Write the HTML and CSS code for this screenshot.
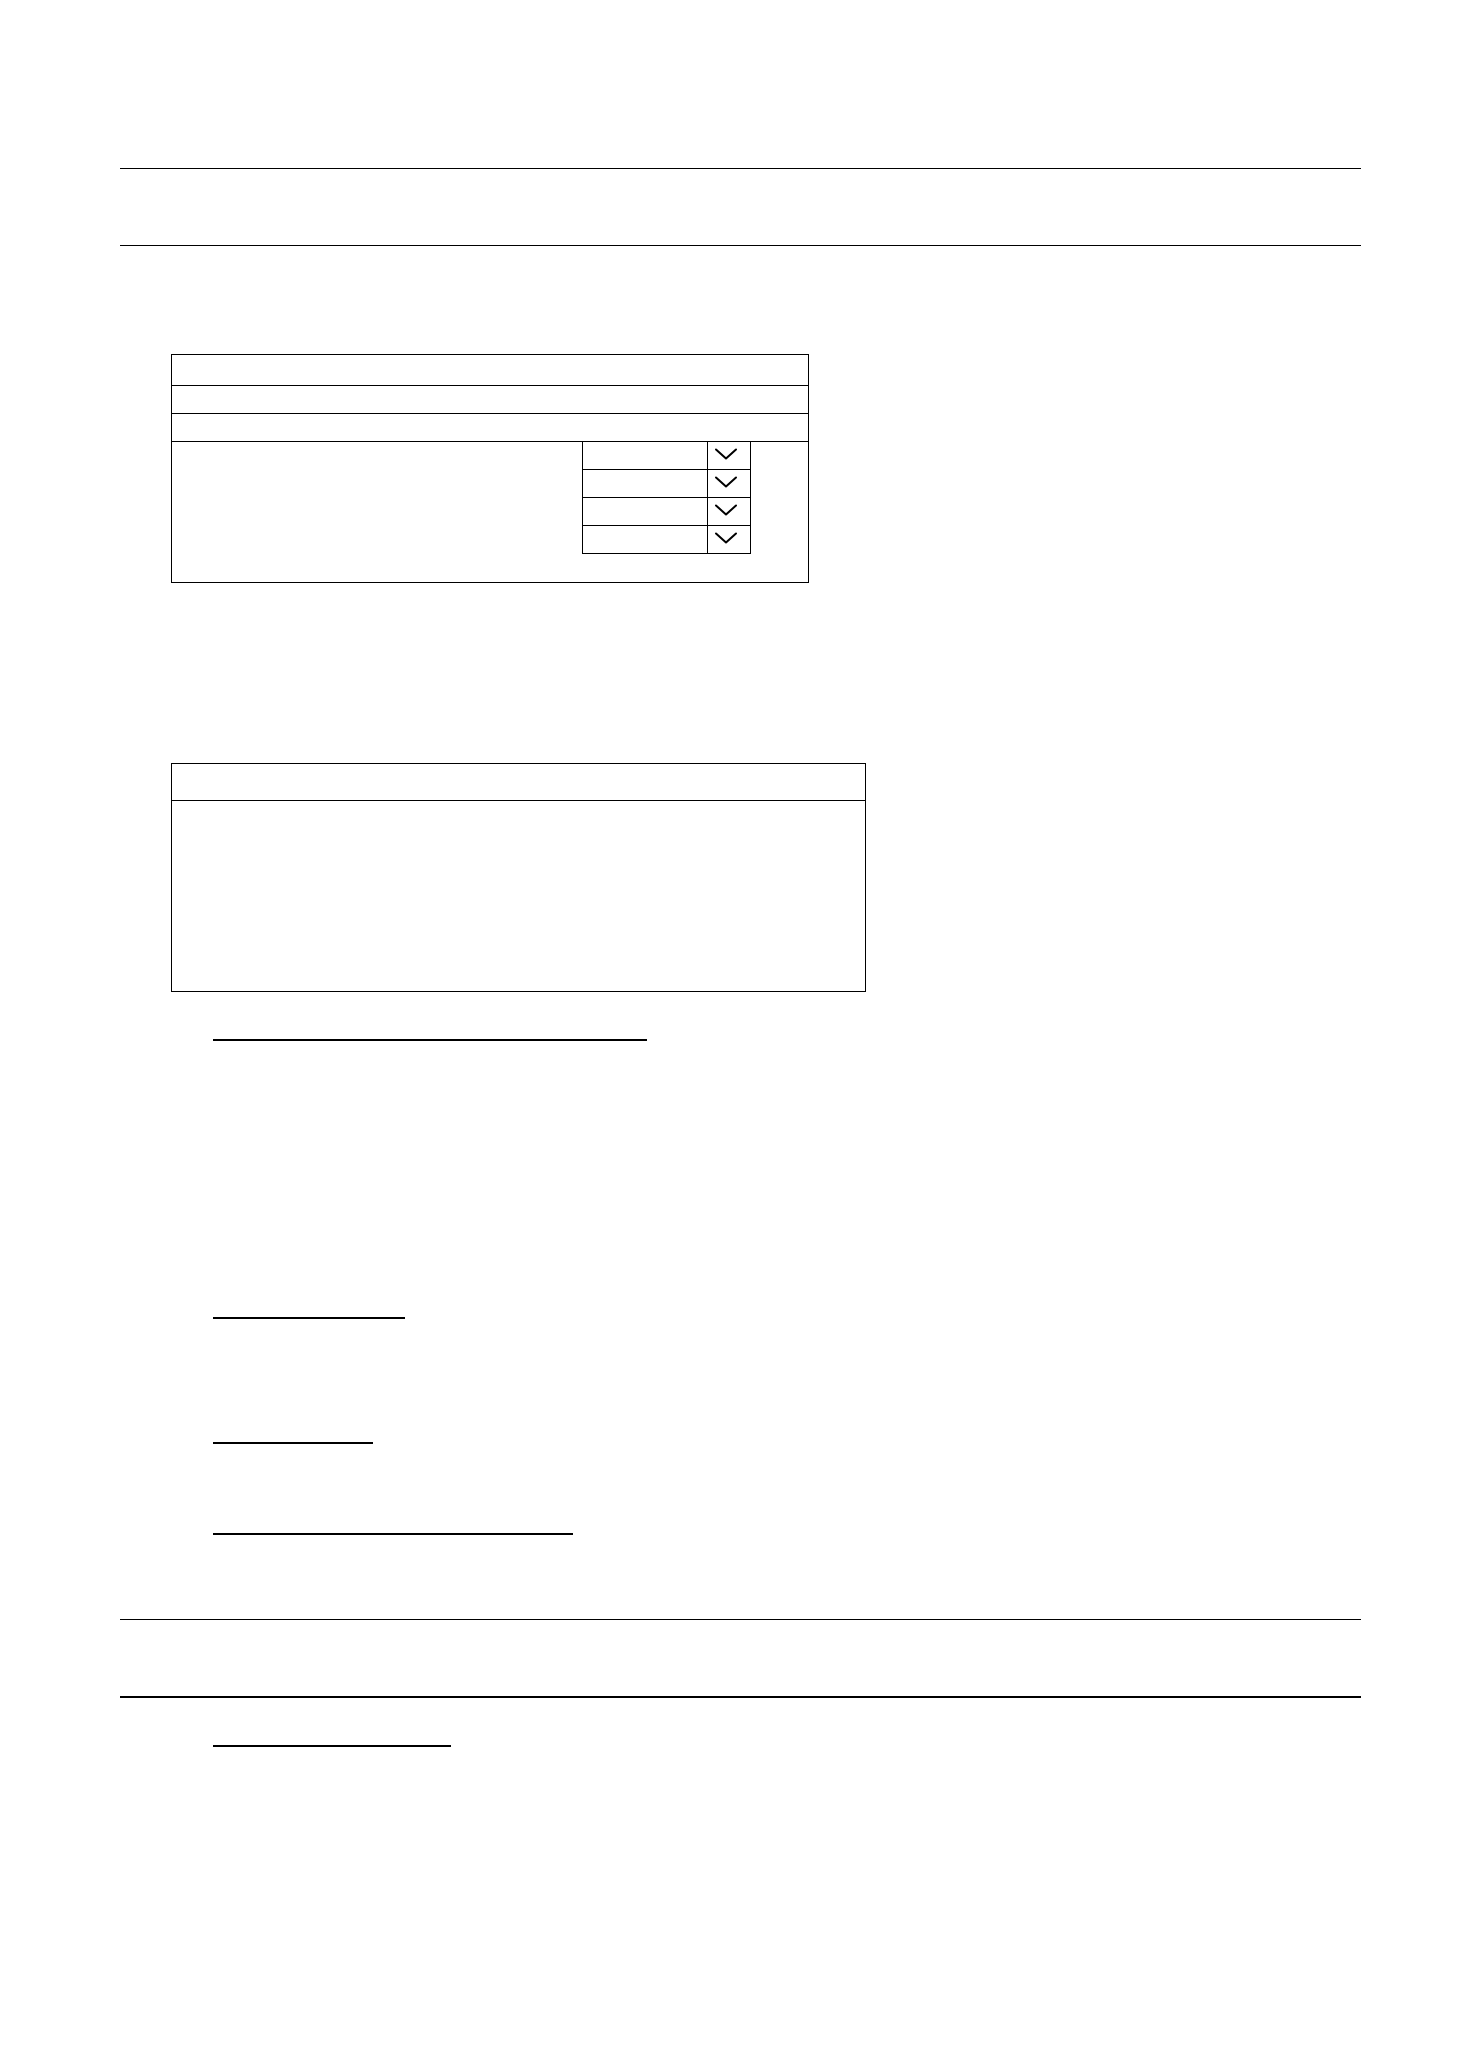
FILE: index.html
```
<!DOCTYPE html>
<html lang="en">
<head>
	<meta charset="UTF-8" />
	<meta name="viewport" content="width=device-width, initial-scale=1.0" />
	<title>Form</title>
	<link rel="stylesheet" href="styles.css">
</head>
<body>
<main class="page">
	<header class="band"></header>

	<section class="panel options">
		<div class="row title"></div>
		<div class="row"></div>
		<div class="row"></div>
		<div class="pickers">
			<label class="picker">
				<select aria-label="Option 1"><option></option></select>
				<svg viewBox="0 0 42 27"><path d="M8 7.5 L18 16.5 L28 7.5"/></svg>
			</label>
			<label class="picker">
				<select aria-label="Option 2"><option></option></select>
				<svg viewBox="0 0 42 27"><path d="M8 7.5 L18 16.5 L28 7.5"/></svg>
			</label>
			<label class="picker">
				<select aria-label="Option 3"><option></option></select>
				<svg viewBox="0 0 42 27"><path d="M8 7.5 L18 16.5 L28 7.5"/></svg>
			</label>
			<label class="picker">
				<select aria-label="Option 4"><option></option></select>
				<svg viewBox="0 0 42 27"><path d="M8 7.5 L18 16.5 L28 7.5"/></svg>
			</label>
		</div>
	</section>

	<section class="panel notes">
		<div class="notes-title"></div>
		<div class="notes-body"></div>
	</section>

	<section class="topic topic-long"><hr class="rule"></section>
	<section class="topic topic-medium"><hr class="rule"></section>
	<section class="topic topic-short"><hr class="rule"></section>
	<section class="topic topic-wide"><hr class="rule"></section>

	<header class="band band-heavy"></header>

	<section class="topic topic-last"><hr class="rule"></section>
</main>
</body>
</html>
```

FILE: styles.css
```
* {
	padding: 0;
	margin: 0;
	box-sizing: border-box;
}
body {
	background: #fff;
	color: #000;
	font-family: "Liberation Sans", Arial, sans-serif;
	font-size: 16px;
}
.page {
	display: flex;
	flex-direction: column;
	padding: 168px 97px 0 120px;
}
.band {
	height: 78px;
	border-top: 1px solid #000;
	border-bottom: 1px solid #000;
}
.band-heavy {
	height: 79px;
	border-bottom-width: 2px;
}

/* bordered panels */
.panel {
	width: 100%;
	margin-left: 51px;
	border: 1px solid #000;
}
.options {
	max-width: 638px;
	margin-top: 108px;
}
.row {
	height: 28px;
	border-bottom: 1px solid #000;
}
.row.title {
	height: 31px;
}
.pickers {
	display: flex;
	flex-direction: column;
	align-items: flex-end;
	padding: 0 57px 28px 0;
}
.picker {
	display: grid;
	grid-template-columns: 124px 43px;
	grid-template-rows: 27px;
	border: 1px solid #000;
	border-top: 0;
}
.picker select {
	grid-area: 1 / 1 / 2 / 3;
	appearance: none;
	border: 0;
	padding: 0 8px;
	background: transparent;
	font: inherit;
}
/* arrow sits in the right part of the select */
.picker svg {
	grid-area: 1 / 2;
	width: 43px;
	height: 27px;
	border-left: 1px solid #000;
	pointer-events: none;
}
.picker path {
	fill: none;
	stroke: #000;
	stroke-width: 2;
	stroke-linecap: round;
	stroke-linejoin: round;
}

.notes {
	max-width: 695px;
	margin-top: 180px;
}
.notes-title {
	height: 37px;
	border-bottom: 1px solid #000;
}
.notes-body {
	height: 190px;
}

/* underlined topics */
.topic {
	padding-left: 93px;
}
.rule {
	border: 0;
	border-top: 2px solid #000;
}
.topic-long {
	padding-top: 47px;
}
.topic-long .rule {
	width: 434px;
}
.topic-medium {
	padding-top: 276px;
}
.topic-medium .rule {
	width: 192px;
}
.topic-short {
	padding-top: 123px;
}
.topic-short .rule {
	width: 160px;
}
.topic-wide {
	padding-top: 89px;
	padding-bottom: 84px;
}
.topic-wide .rule {
	width: 360px;
}
.topic-last {
	padding-top: 47px;
}
.topic-last .rule {
	width: 238px;
}
```
